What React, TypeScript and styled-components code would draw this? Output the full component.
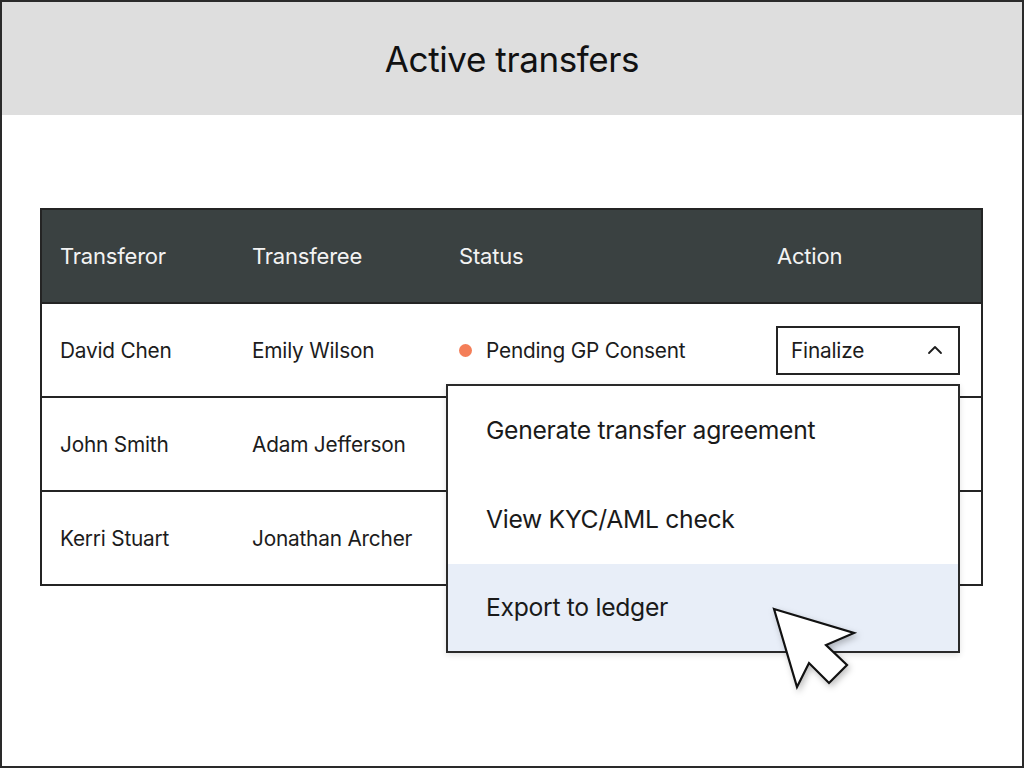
import styled, { createGlobalStyle } from "styled-components";

const GlobalStyle = createGlobalStyle`
  html, body { margin: 0; padding: 0; }
  body {
    font-family: Inter, "Noto Sans", sans-serif;
    color: #1c1c1c;
    background: #ffffff;
  }
  * { box-sizing: border-box; }
`;

const Page = styled.div`
  position: relative;
  width: 1024px;
  height: 768px;
  border: 2px solid #2a2a2a;
  background: #ffffff;
  overflow: hidden;
`;

const TitleBar = styled.header`
  height: 113px;
  background: #dedede;
  display: flex;
  align-items: center;
  justify-content: center;
`;

const Title = styled.h1`
  margin: 0;
  font-size: 35px;
  font-weight: 400;
  letter-spacing: -0.4px;
  color: #111;
`;

const TableWrap = styled.div`
  margin: 93px 39px 0 38px;
  border: 2px solid #242424;
`;

const Row = styled.div<{ $head?: boolean }>`
  display: grid;
  grid-template-columns: 192px 207px 318px 1fr;
  align-items: center;
  height: ${(p) => (p.$head ? "92px" : "94px")};
  padding-left: 18px;
  background: ${(p) => (p.$head ? "#3a4141" : "#ffffff")};
  color: ${(p) => (p.$head ? "#f3f3f3" : "#1c1c1c")};
  font-size: ${(p) => (p.$head ? "22px" : "20.8px")};
  letter-spacing: -0.2px;
  border-top: ${(p) => (p.$head ? "none" : "2px solid #242424")};
`;

const Cell = styled.div`
  display: flex;
  align-items: center;
  white-space: nowrap;
`;

const Dot = styled.span`
  width: 13px;
  height: 13px;
  border-radius: 50%;
  background: #f47e58;
  margin: 0 14px 0 0;
`;

const Dropdown = styled.div`
  position: relative;
  margin-left: -1px;
`;

const Trigger = styled.button`
  width: 184px;
  height: 49px;
  border: 2px solid #242424;
  background: #fff;
  display: flex;
  align-items: center;
  justify-content: space-between;
  padding: 0 14px 0 13px;
  font-family: inherit;
  font-size: 20.8px;
  letter-spacing: -0.2px;
  color: #1c1c1c;
`;

const Menu = styled.ul`
  position: absolute;
  right: 0;
  top: calc(100% + 9px);
  width: 514px;
  margin: 0;
  padding: 0;
  list-style: none;
  background: #fff;
  border: 2px solid #2a2a2a;
  box-shadow: 0 2px 6px rgba(0, 0, 0, 0.12);
  z-index: 2;
`;

const MenuItem = styled.li<{ $active?: boolean }>`
  height: ${(p) => (p.$active ? "87px" : "89px")};
  display: flex;
  align-items: center;
  padding-left: 38px;
  font-size: 24.7px;
  letter-spacing: -0.3px;
  color: #1a1a1a;
  background: ${(p) => (p.$active ? "#e8eef8" : "#fff")};
`;

const Cursor = styled.svg`
  position: absolute;
  left: 758px;
  top: 596px;
  z-index: 3;
  filter: drop-shadow(2px 3px 3px rgba(0, 0, 0, 0.25));
`;

const rows = [
  { from: "David Chen", to: "Emily Wilson", status: "Pending GP Consent" },
  { from: "John Smith", to: "Adam Jefferson", status: "" },
  { from: "Kerri Stuart", to: "Jonathan Archer", status: "" },
];

const menuItems = ["Generate transfer agreement", "View KYC/AML check", "Export to ledger"];

const ChevronUp = () => (
  <svg width="18" height="18" viewBox="0 0 18 18" fill="none">
    <path d="M3 12 L9 6 L15 12" stroke="#1c1c1c" strokeWidth="1.8" strokeLinecap="round" strokeLinejoin="round" />
  </svg>
);

export default function App() {
  return (
    <>
      <GlobalStyle />
      <Page>
        <TitleBar>
          <Title>Active transfers</Title>
        </TitleBar>
        <TableWrap>
          <Row $head>
            <Cell>Transferor</Cell>
            <Cell>Transferee</Cell>
            <Cell>Status</Cell>
            <Cell>Action</Cell>
          </Row>
          {rows.map((r, i) => (
            <Row key={r.from}>
              <Cell>{r.from}</Cell>
              <Cell>{r.to}</Cell>
              <Cell>
                {r.status && (
                  <>
                    <Dot />
                    {r.status}
                  </>
                )}
              </Cell>
              <Cell>
                {i === 0 && (
                  <Dropdown>
                    <Trigger>
                      Finalize
                      <ChevronUp />
                    </Trigger>
                    <Menu>
                      {menuItems.map((m, j) => (
                        <MenuItem key={m} $active={j === 2}>
                          {m}
                        </MenuItem>
                      ))}
                    </Menu>
                  </Dropdown>
                )}
              </Cell>
            </Row>
          ))}
        </TableWrap>
        <Cursor width="100" height="100" viewBox="758 596 100 100">
          <polygon
            points="772,607 852,631 824,643 845,663 827,681 807,661 795,685"
            fill="#ffffff"
            stroke="#111"
            strokeWidth="2.2"
            strokeLinejoin="miter"
          />
        </Cursor>
      </Page>
    </>
  );
}
